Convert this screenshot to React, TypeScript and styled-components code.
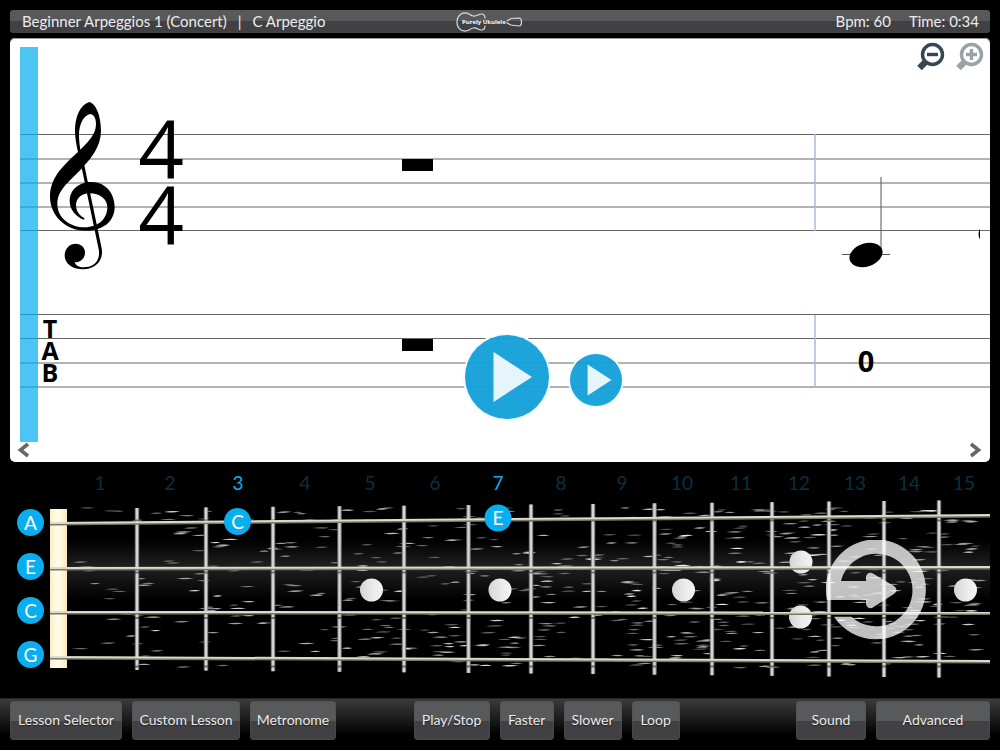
import React from "react";
import styled, { createGlobalStyle } from "styled-components";

const SANS = 'Lato, "Open Sans", "Noto Sans", sans-serif';
const SCORE_SANS = '"Open Sans", "Noto Sans", sans-serif';
const BLUE = "#0aadee";

const GlobalStyle = createGlobalStyle`
  * { box-sizing: border-box; }
  html, body { margin: 0; background: #000; }
  body { font-family: ${SANS}; }
  button { font-family: inherit; padding: 0; border: 0; cursor: pointer; }
`;

const Page = styled.div`
  display: flex;
  flex-direction: column;
  min-height: 100vh;
  background: #000;
`;

const TitleBar = styled.header`
  display: grid;
  grid-template-columns: 1fr auto 1fr;
  align-items: center;
  height: 23px;
  margin: 10px 10px 5px;
  padding: 0 11px 0 12px;
  border-radius: 3px;
  background: linear-gradient(#58595b 0 50%, #414042 50% 100%);
  color: #ececec;
  font-size: 15px;
  line-height: 22px;
  white-space: nowrap;
`;

const LessonTitle = styled.h1`
  margin: 0 0 2px;
  font-size: inherit;
  font-weight: 400;
`;

const Divider = styled.span`
  margin: 0 11px;
`;

const Readouts = styled.div`
  display: flex;
  justify-content: flex-end;
  gap: 18px;
  margin-bottom: 2px;
`;

const ScorePanel = styled.main`
  position: relative;
  margin: 0 10px;
  border-radius: 5px;
  background: #fff;
  box-shadow: inset 0 1px 0 #9a9a9a;
`;

const Drawing = styled.svg`
  display: block;
  width: 100%;
  height: auto;
`;

const ZoomControls = styled.div`
  position: absolute;
  top: 4px;
  right: 6px;
  display: flex;
  gap: 9px;
`;

const IconButton = styled.button`
  display: block;
  background: none;
  line-height: 0;
  &:disabled { opacity: 0.5; cursor: default; }
`;

const ScrollButton = styled(IconButton)<{ $side: "left" | "right" }>`
  position: absolute;
  bottom: 4px;
  ${(p) => p.$side}: 7px;
`;

const PlayControls = styled.div`
  position: absolute;
  top: 70%;
  left: calc(50% - 35px);
  display: flex;
  align-items: flex-end;
  gap: 21px;
`;

const RoundPlay = styled.button<{ $size: number }>`
  width: ${(p) => p.$size}px;
  height: ${(p) => p.$size}px;
  margin-bottom: ${(p) => (p.$size < 60 ? 13 : 0)}px;
  border-radius: 50%;
  background: rgba(16, 159, 217, 0.95);
  box-shadow: 0 0 0 2px #f4fbfe;
  svg { display: block; width: 100%; height: 100%; }
`;

const NeckSection = styled.section`
  display: flex;
  padding-right: 10px;
`;

const StringLabels = styled.div`
  display: flex;
  flex: 0 0 50px;
  flex-direction: column;
  gap: 17px;
  padding: 47px 0 0 17px;
`;

const StringLabel = styled.span`
  display: flex;
  align-items: center;
  justify-content: center;
  width: 27px;
  height: 27px;
  border-radius: 50%;
  background: ${BLUE};
  color: #fff;
  font-size: 19px;
  line-height: 27px;
`;

const Neck = styled.div`
  position: relative;
  flex: 1;
  min-width: 0;
`;

const AdvanceButton = styled(IconButton)`
  position: absolute;
  top: 33%;
  left: 82.6%;
  opacity: 0.75;
`;

const Toolbar = styled.footer`
  display: flex;
  height: 52px;
  padding: 2px 10px 0;
  border-top: 1px solid #242424;
  background: linear-gradient(#3b3b3b, #000 36px);
`;

const ButtonGroup = styled.div`
  display: flex;
  gap: 10px;
`;

const Spacer = styled.div<{ $grow: number }>`
  flex: ${(p) => p.$grow} 0 0;
`;

const ToolButton = styled.button<{ $width: number }>`
  width: ${(p) => p.$width}px;
  height: 39px;
  padding-bottom: 1px;
  border-radius: 4px;
  background: linear-gradient(#58595b 0 20px, #414042 20px);
  box-shadow: inset 0 0 0 1px rgba(80, 80, 82, 0.5);
  color: #ececec;
  font-size: 14px;
  line-height: 38px;
  text-shadow: 0 1px 1px #222;
  white-space: nowrap;
`;

const Logo = styled.svg`
  margin-right: 22px;
`;

const UkuleleLogo = () => (
  <Logo width="68" height="22" viewBox="0 0 68 22" role="img" aria-label="Purely Ukulele">
    <g fill="none" stroke="#dedede" strokeWidth="1.200" strokeLinecap="round">
      <path d="M29 7C29 3 26 2 22 4C18 6 16 5 13 3C7 0 1 4 1 11C1 18 7 22 13 19C16 17 18 16 22 18C26 20 29 19 29 15" />
      <path d="M51 10L55 7.500L63 7Q65.500 7 65.500 11Q65.500 15 63 15L55 14L51 12" />
    </g>
    <text x="6" y="13" fill="#fff" fontFamily={SCORE_SANS} fontSize="6" fontWeight="700">Purely Ukulele</text>
  </Logo>
);

const Magnifier = ({ plus }: { plus?: boolean }) => (
  <svg width="30" height="30" viewBox="0 0 30 30" fill="none" stroke="#36474f">
    <circle cx="17.500" cy="12.500" r="10" strokeWidth="3.400" />
    <path d="M12 12.500H23" strokeWidth="3.400" />
    {plus && <path d="M17.500 7V18" strokeWidth="3.400" />}
    <path d="M11 19.500L4.500 26" strokeWidth="6.400" />
  </svg>
);

const Chevron = ({ right }: { right?: boolean }) => (
  <svg width="14" height="16" viewBox="0 0 14 16" fill="none" stroke="#666" strokeWidth="3.600">
    <path d={right ? "M2 2L9.500 8L2 14" : "M11 2L3.500 8L11 14"} />
  </svg>
);

const PlayTriangle = () => (
  <svg viewBox="0 0 84 84">
    <path d="M28.500 17L67 42L28.500 67Z" fill="#e6f5fb" />
  </svg>
);

const TrebleClef = () => (
  <g transform="scale(0.33333)" fillRule="evenodd">
    <path d="M268 306C290 312 303 352 303 392C303 440 272 476 250 500C215 540 172 565 172 612C172 655 212 682 254 682C296 682 322 655 322 622C322 598 300 580 268 580C242 580 228 598 228 615C228 635 240 648 254 655L251 659C228 652 209 628 209 604C209 570 235 546 275 546C318 546 344 582 344 620C344 665 308 692 258 692C195 692 150 645 150 590C150 530 195 492 234 456C229 435 225 412 225 392C225 350 240 315 268 306ZM241 449C262 428 288 405 288 372C288 352 280 342 270 342C250 346 237 375 237 405C237 420 239 435 241 449Z" />
    <path d="M244 499L253 496L305 745C312 785 282 808 250 808C215 808 194 790 194 766C194 745 210 731 227 731C243 731 255 742 255 757C255 775 243 787 224 787C226 796 238 802 250 802C284 802 302 780 296 748Z" />
  </g>
);

const STAFF_LINES = [134.5, 159, 183, 207, 230.5];
const TAB_LINES = [314.5, 338.5, 363, 387];
const TAB_LETTERS: [string, number][] = [["T", 338], ["A", 360], ["B", 382]];

const Score = () => (
  <Drawing viewBox="10 38 980 424" fontFamily={SCORE_SANS} role="img" aria-label="Staff and tablature">
    {[...STAFF_LINES, ...TAB_LINES].map((y) => (
      <path key={y} d={`M20 ${y}H990`} stroke="#666" />
    ))}
    <path d="M815 134V231M815 315V387" stroke="#a9badb" strokeWidth="1.500" />
    <TrebleClef />
    <g fontSize="80" textAnchor="middle">
      <text x="161" y="178">4</text>
      <text x="161" y="244">4</text>
    </g>
    <path d="M402 159H433V171H402ZM402 339H433V351H402Z" />
    <path d="M881 177V252M842 254.500H890" stroke="#555" fill="none" />
    <ellipse cx="866" cy="255" rx="17" ry="11.500" transform="rotate(-18 866 255)" />
    <path d="M980 228.500Q977 234 980 239.500Z" />
    <g fontSize="25" fontWeight="700" textAnchor="middle">
      {TAB_LETTERS.map(([letter, y]) => (
        <text key={letter} x="50" y={y}>{letter}</text>
      ))}
    </g>
    <text x="866" y="372" fontSize="29" fontWeight="700" textAnchor="middle">0</text>
    <rect x="20" y="47" width="18" height="395" fill="#00adef" opacity="0.7" />
  </Drawing>
);

const FRETS = [137, 206, 273, 339.5, 404, 468.5, 531, 593, 654.5, 712, 772, 829, 884, 939];
const FRET_NUMBERS = [100, 170, 238, 305, 370, 435, 498, 561, 622, 682, 741, 799, 855, 909, 964];
const ACTIVE_FRETS = [3, 7];
const STRINGS: [number, number][] = [[523.5, 515.5], [568.5, 567.5], [612.5, 613], [657.5, 661.5]];
const INLAYS: [number, number][] = [[371.5, 590], [500, 590], [683.5, 590], [801, 562], [800.5, 617], [965.5, 590]];
const NOTES: [string, number, number][] = [["C", 237.5, 521.5], ["E", 498, 518]];

// Wood grain: short pale streaks from a fixed seed, denser toward the body.
const makeGrain = (count: number) => {
  let seed = 71;
  const next = () => {
    seed = (seed * 16807) % 2147483647;
    return seed / 2147483647;
  };
  return Array.from({ length: count }, () => {
    const x = 70 + 902 * Math.pow(next(), 0.78);
    const y = 508 + next() * 160;
    const length = 10 + next() * 8;
    const alpha = 0.35 + 0.6 * Math.pow(next(), 2);
    return { x, y, length, alpha };
  });
};
const GRAIN = makeGrain(620);

const Fretboard = () => (
  <Drawing viewBox="50 462 940 236" fontFamily={SANS} role="img" aria-label="Ukulele fretboard">
    <defs>
      <linearGradient id="wood" x1="0" y1="0" x2="0" y2="1">
        <stop offset="0" stopColor="#000" />
        <stop offset="0.45" stopColor="#202020" />
        <stop offset="1" stopColor="#000" />
      </linearGradient>
      <linearGradient id="nut">
        <stop offset="0" stopColor="#fdeec4" />
        <stop offset="0.35" stopColor="#fffbe8" />
        <stop offset="0.6" stopColor="#fffae0" />
        <stop offset="1" stopColor="#fbe9bd" />
      </linearGradient>
      <linearGradient id="pearl">
        <stop offset="0" stopColor="#d3d4d6" />
        <stop offset="0.6" stopColor="#ececec" />
        <stop offset="1" stopColor="#f2f2f2" />
      </linearGradient>
    </defs>
    <g fontSize="19" textAnchor="middle">
      {FRET_NUMBERS.map((x, i) => (
        <text key={x} x={x} y="490" fill={ACTIVE_FRETS.includes(i + 1) ? BLUE : "#0a3040"}>{i + 1}</text>
      ))}
    </g>
    <rect x="67" y="540" width="923" height="60" fill="url(#wood)" />
    <g fill="#fff">
      {GRAIN.map((g, i) => (
        <path
          key={i}
          opacity={g.alpha}
          d={`M${g.x} ${g.y}q${g.length / 2} -1.500 ${g.length} -0.400q${-g.length / 2} 1.500 ${-g.length} 0.400Z`}
        />
      ))}
    </g>
    {INLAYS.map(([x, y]) => (
      <circle key={`${x}-${y}`} cx={x} cy={y} r="11.500" fill="url(#pearl)" />
    ))}
    <rect x="50" y="509" width="17" height="159" fill="url(#nut)" />
    {FRETS.map((x, i) => {
      const top = 508 - i * 0.58;
      const bottom = 670 + i * 0.58;
      return (
        <g key={x}>
          <path d={`M${x} ${top}V${bottom}`} stroke="#77777a" strokeWidth="4.400" />
          <path d={`M${x} ${top}V${bottom}`} stroke="#d4d4d8" strokeWidth="2.400" />
          {STRINGS.map(([, y]) => (
            <path key={y} d={`M${x - 2} ${y + 5}h4`} stroke="#333" strokeWidth="2" opacity="0.600" />
          ))}
        </g>
      );
    })}
    {STRINGS.map(([y1, y2]) => (
      <g key={y1}>
        <path d={`M50 ${y1 + 1}L990 ${y2 + 1}`} stroke="#77766c" strokeWidth="2" />
        <path d={`M50 ${y1 - 0.5}L990 ${y2 - 0.5}`} stroke="#dedcc8" strokeWidth="2" />
      </g>
    ))}
    <g fontSize="19" textAnchor="middle">
      {NOTES.map(([name, x, y]) => (
        <g key={name}>
          <circle cx={x} cy={y} r="13.500" fill={BLUE} />
          <text x={x} y={y + 7} fill="#fff">{name}</text>
        </g>
      ))}
    </g>
  </Drawing>
);

const AdvanceArrow = () => (
  <svg width="100" height="100" viewBox="-50 -50 100 100" fill="#fff">
    <path d="M-49 10A50 50 0 1 1 -42 26.700L-24.500 26.700A36.300 36.300 0 1 0 -35 -9L-10 -9L-10 -13Q-9 -18 -4 -17L18 -4Q23 0 18 4L-4 18Q-9 19 -10 14L-10 10Z" />
  </svg>
);

const LESSON_TOOLS: [string, number][] = [["Lesson Selector", 112], ["Custom Lesson", 108], ["Metronome", 86]];
const PLAYBACK_TOOLS: [string, number][] = [["Play/Stop", 76], ["Faster", 54], ["Slower", 58], ["Loop", 48]];
const SETTING_TOOLS: [string, number][] = [["Sound", 70], ["Advanced", 114]];

const Tools = ({ items }: { items: [string, number][] }) => (
  <ButtonGroup>
    {items.map(([label, width]) => (
      <ToolButton key={label} type="button" $width={width}>{label}</ToolButton>
    ))}
  </ButtonGroup>
);

export default function App() {
  return (
    <Page>
      <GlobalStyle />
      <TitleBar>
        <LessonTitle>
          Beginner Arpeggios 1 (Concert)<Divider>|</Divider>C Arpeggio
        </LessonTitle>
        <UkuleleLogo />
        <Readouts>
          <span>Bpm: 60</span>
          <span>Time: 0:34</span>
        </Readouts>
      </TitleBar>
      <ScorePanel>
        <Score />
        <ZoomControls>
          <IconButton type="button" aria-label="Zoom out"><Magnifier /></IconButton>
          <IconButton type="button" aria-label="Zoom in" disabled><Magnifier plus /></IconButton>
        </ZoomControls>
        <PlayControls>
          <RoundPlay type="button" aria-label="Play" $size={84}><PlayTriangle /></RoundPlay>
          <RoundPlay type="button" aria-label="Play slowly" $size={52}><PlayTriangle /></RoundPlay>
        </PlayControls>
        <ScrollButton type="button" aria-label="Previous" $side="left"><Chevron /></ScrollButton>
        <ScrollButton type="button" aria-label="Next" $side="right"><Chevron right /></ScrollButton>
      </ScorePanel>
      <NeckSection>
        <StringLabels>
          {["A", "E", "C", "G"].map((name) => (
            <StringLabel key={name}>{name}</StringLabel>
          ))}
        </StringLabels>
        <Neck>
          <Fretboard />
          <AdvanceButton type="button" aria-label="Next lesson"><AdvanceArrow /></AdvanceButton>
        </Neck>
      </NeckSection>
      <Toolbar>
        <Tools items={LESSON_TOOLS} />
        <Spacer $grow={2} />
        <Tools items={PLAYBACK_TOOLS} />
        <Spacer $grow={3} />
        <Tools items={SETTING_TOOLS} />
      </Toolbar>
    </Page>
  );
}
